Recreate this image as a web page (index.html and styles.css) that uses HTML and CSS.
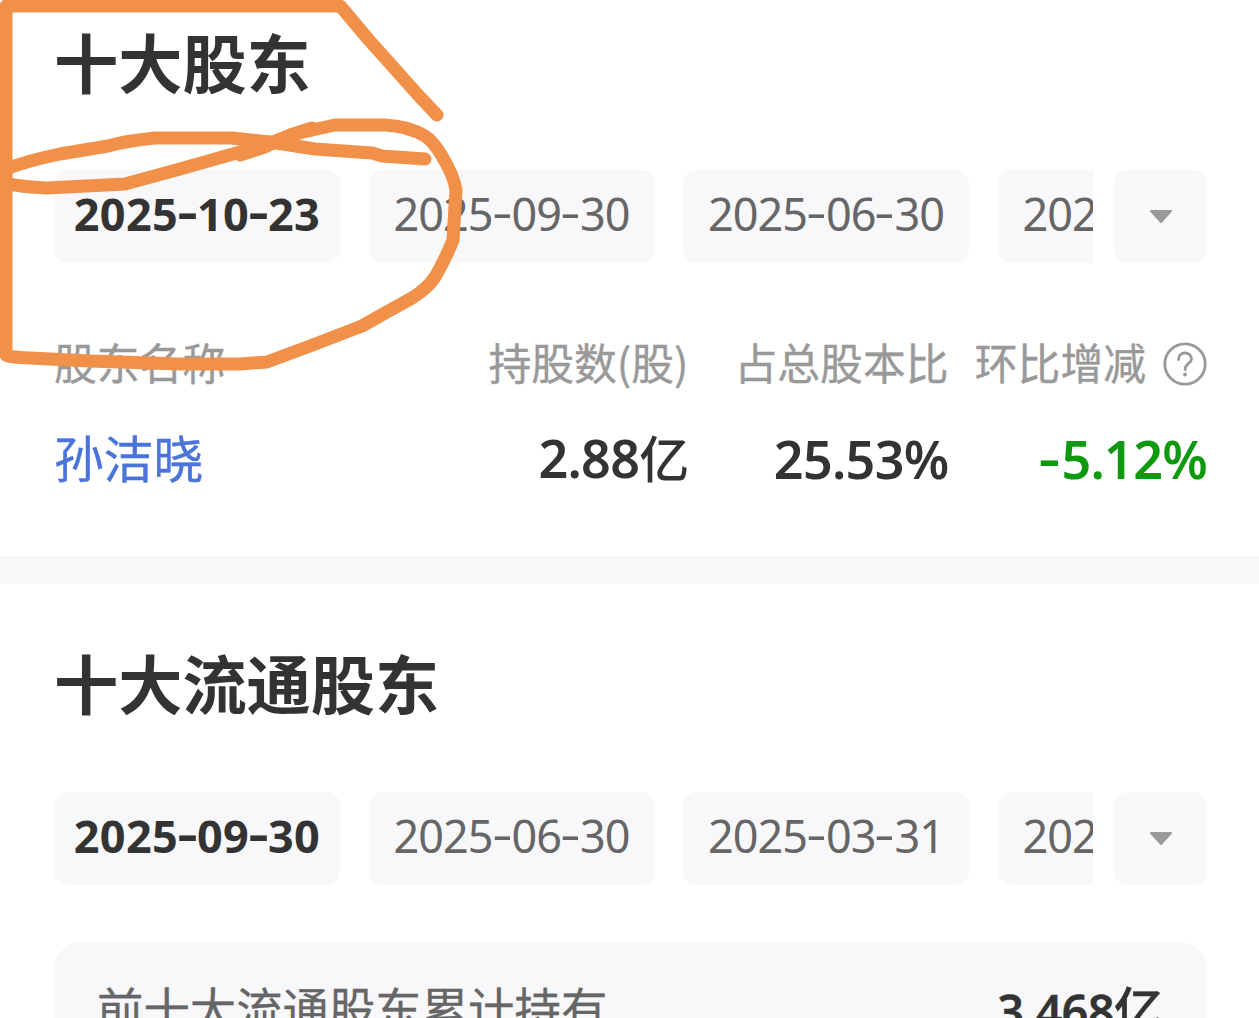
FILE: index.html
```html
<!DOCTYPE html>
<html lang="zh-CN">
<head>
    <meta charset="UTF-8">
    <meta name="viewport" content="width=device-width, initial-scale=1.0">
    <title>十大股东</title>
    <link rel="stylesheet" href="styles.css">
</head>
<body>
    <!-- 十大股东 -->
    <section class="section holders">
        <h2>十大股东</h2>
        <div class="date-bar">
            <div class="dates">
                <button class="date active">2025<i>-</i>10<i>-</i>23</button>
                <button class="date">2025<i>-</i>09<i>-</i>30</button>
                <button class="date">2025<i>-</i>06<i>-</i>30</button>
                <button class="date">2025<i>-</i>03<i>-</i>31</button>
            </div>
            <button class="more" aria-label="更多">
                <svg width="24" height="16" viewBox="0 0 24 16"><path d="M2 2h20L12 13z" fill="#999" stroke="#999" stroke-width="2" stroke-linejoin="round"/></svg>
            </button>
        </div>
        <div class="row head">
            <span>股东名称</span>
            <span>持股数(股)</span>
            <span>占总股本比</span>
            <span class="change">环比增减
                <svg width="44" height="44" viewBox="0 0 44 44" fill="none" stroke="#999" stroke-width="2.8">
                    <circle cx="22" cy="22" r="20.2"/>
                    <path d="M15.5 17.5c0-4 2.8-6.5 6.5-6.5s6.5 2.5 6.5 6c0 4.5-6.3 4.8-6.3 9.5v1" stroke-linecap="round"/>
                    <circle cx="22" cy="32.5" r="1.9" fill="#999" stroke="none"/>
                </svg>
            </span>
        </div>
        <div class="row data">
            <a class="name">孙洁晓</a>
            <span>2.88<b>亿</b></span>
            <span>25.53%</span>
            <span class="down"><i>-</i>5.12%</span>
        </div>
    </section>

    <!-- 十大流通股东 -->
    <section class="section">
        <h2>十大流通股东</h2>
        <div class="date-bar">
            <div class="dates">
                <button class="date active">2025<i>-</i>09<i>-</i>30</button>
                <button class="date">2025<i>-</i>06<i>-</i>30</button>
                <button class="date">2025<i>-</i>03<i>-</i>31</button>
                <button class="date">2024<i>-</i>12<i>-</i>31</button>
            </div>
            <button class="more" aria-label="更多">
                <svg width="24" height="16" viewBox="0 0 24 16"><path d="M2 2h20L12 13z" fill="#999" stroke="#999" stroke-width="2" stroke-linejoin="round"/></svg>
            </button>
        </div>
        <div class="summary">
            <span>前十大流通股东累计持有</span>
            <strong>3.468<b>亿</b></strong>
        </div>
    </section>

    <!-- 手绘标记 -->
    <svg class="marker" width="480" height="380" viewBox="0 0 480 380">
        <path d="M437 115L419 96L394 68L368 39L342 8Q341 6 339 6H6V355Q7 357 30 358L90 361L180 364H240L267 362L310 346L362 326L385 313L412 298Q428 288 435 277Q445 260 453 240L456 190Q454 176 442 156Q433 141 425 136Q408 126 385 125H335L312 130Q295 133 270 143L240 152L180 169L125 184L47 188Q20 187 6 183"/>
        <path d="M6 169Q30 160 60 154L108 146Q125 141 155 138H232L270 142L315 149L372 153L382 156L425 159"/>
        <path d="M240 155L265 147L290 135L312 128"/>
    </svg>
</body>
</html>
```
FILE: styles.css
```css
* {
    box-sizing: border-box;
}

body {
    margin: 0;
    height: 1018px;
    overflow: hidden;
    position: relative;
    background-color: #fff;
    color: #333;
    font-family: "Noto Sans CJK SC", sans-serif;
}

i, b {
    font-style: normal;
    font-weight: inherit;
}

.section {
    padding: 0 52px 0 54px;
}

.holders {
    height: 584px;
    border-bottom: 28px solid #f8f8fb;
}

h2 {
    margin: 0;
    padding-top: 12px;
    height: 170px;
    font-size: 64.2px;
    line-height: 96px;
    font-weight: 700;
}

.holders + .section h2 {
    height: 208px;
    padding-top: 49px;
}

.date-bar {
    display: flex;
    justify-content: space-between;
}

.dates {
    display: flex;
    gap: 28.5px;
    width: 1039px;
    overflow: hidden;
}

.date, .more {
    flex: none;
    height: 93px;
    border: none;
    border-radius: 14px;
    background-color: #f8f8fb;
}

.date {
    width: 286px;
    padding: 0 0 6px;
    color: #666;
    font-family: "Noto Sans", sans-serif;
    font-size: 45px;
    letter-spacing: -1px;
    white-space: nowrap;
}

.date i {
    display: inline-block;
    width: 19px;
    letter-spacing: 0;
    text-align: center;
    transform: translateY(-3px) scaleX(1.4);
}

.date.active {
    color: #333;
    font-weight: 700;
    letter-spacing: 0.3px;
}

.more {
    display: flex;
    align-items: center;
    justify-content: center;
    width: 93px;
    padding: 0;
}

.row {
    display: grid;
    grid-template-columns: 334px 300.5px 260px 258.5px;
    align-items: center;
    text-align: right;
    white-space: nowrap;
}

.row > :first-child {
    text-align: left;
}

.head {
    margin-top: 66px;
    height: 64px;
    color: #999;
    font-size: 42.8px;
    line-height: 64px;
    -webkit-text-stroke: 0.4px #999;
}

.change {
    display: flex;
    align-items: center;
    justify-content: flex-end;
    gap: 17px;
}

.change svg {
    margin-top: 5px;
}

.data {
    margin-top: 29px;
    height: 72px;
    line-height: 72px;
    font-family: "Noto Sans", "Noto Sans CJK SC", sans-serif;
    font-size: 52px;
    font-weight: 600;
    letter-spacing: -0.7px;
}

.data b, .summary b {
    font-size: 50px;
    font-weight: 500;
}

.name {
    color: #4a74d9;
    font-size: 49.8px;
    font-weight: 400;
    letter-spacing: 0;
    -webkit-text-stroke: 0.4px #4a74d9;
}

.down {
    color: #0f990f;
}

.down i {
    display: inline-block;
    width: 24px;
    text-align: center;
    transform: translateY(-2px) scaleX(1.3);
}

.summary {
    display: flex;
    justify-content: space-between;
    margin-top: 57px;
    padding: 29px 44px 0 43px;
    height: 180px;
    border-radius: 28px;
    background-color: #f8f8fb;
    color: #666;
    font-size: 46.4px;
    line-height: 72px;
    -webkit-text-stroke: 0.3px;
}

.summary strong {
    padding-top: 3px;
    color: #333;
    font-family: "Noto Sans", "Noto Sans CJK SC", sans-serif;
    font-size: 47px;
    font-weight: 600;
    letter-spacing: -0.8px;
}

/* 标记覆盖在内容上方 */
.marker {
    position: absolute;
    top: 0;
    left: 0;
    fill: none;
    stroke: #f19149;
    stroke-width: 13;
    stroke-linecap: round;
    stroke-linejoin: round;
    pointer-events: none;
}
```
